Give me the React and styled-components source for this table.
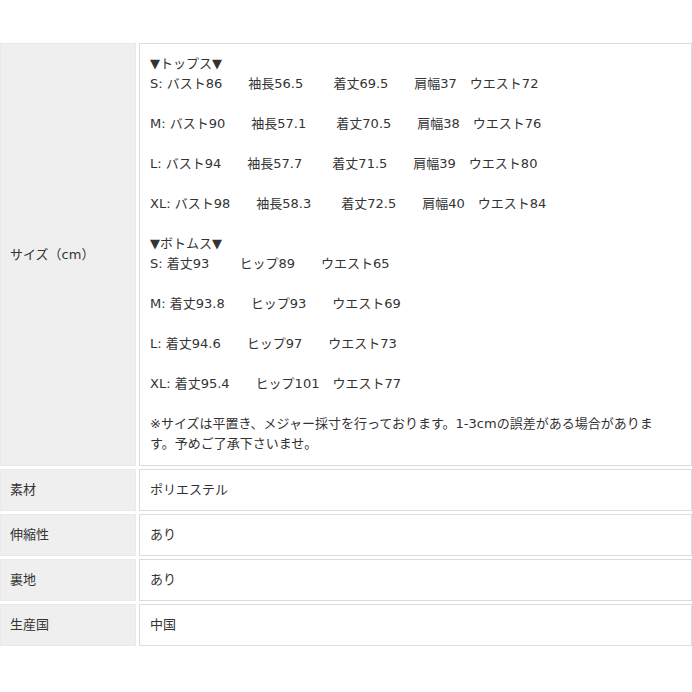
import React from "react";
import styled, { createGlobalStyle } from "styled-components";

const Global = createGlobalStyle`
  html, body { margin: 0; padding: 0; background: #ffffff; }
  body {
    font-family: "DejaVu Sans", "Noto Sans CJK JP", sans-serif;
    font-size: 13px;
    color: #333333;
  }
`;

const Spec = styled.div`
  display: grid;
  grid-template-columns: 136px 553px;
  column-gap: 3px;
  row-gap: 3px;
  width: 692px;
  margin-top: 43px;
`;

const Head = styled.div`
  background: #efefef;
  border: 1px solid #e9e9e9;
  padding: 10px 9px;
  line-height: 20px;
  display: flex;
  align-items: center;
  box-sizing: border-box;
`;

const Data = styled.div`
  background: #ffffff;
  border: 1px solid #dcdcdc;
  padding: ${(p) => (p.$tall ? "10px 10px 11px" : "10px")};
  line-height: 20px;
  box-sizing: border-box;
  min-height: 42px;
`;

const Line = styled.div`
  height: 20px;
  white-space: pre;
`;

const Gap = styled.div`
  height: 20px;
`;

const Note = styled.div`
  line-height: 20px;
`;

const tops = [
  "S: バスト86　　袖長56.5　　 着丈69.5　　肩幅37　ウエスト72",
  "M: バスト90　　袖長57.1　　 着丈70.5　　肩幅38　ウエスト76",
  "L: バスト94　　袖長57.7　　 着丈71.5　　肩幅39　ウエスト80",
  "XL: バスト98　　袖長58.3　　 着丈72.5　　肩幅40　ウエスト84",
];

const bottoms = [
  "S: 着丈93　　 ヒップ89　　ウエスト65",
  "M: 着丈93.8　　ヒップ93　　ウエスト69",
  "L: 着丈94.6　　ヒップ97　　ウエスト73",
  "XL: 着丈95.4　　ヒップ101　ウエスト77",
];

const rows = [
  ["素材", "ポリエステル"],
  ["伸縮性", "あり"],
  ["裏地", "あり"],
  ["生産国", "中国"],
];

export default function App() {
  return (
    <>
      <Global />
      <Spec>
        <Head>サイズ（cm）</Head>
        <Data $tall>
          <Line>▼トップス▼</Line>
          {tops.map((t) => (
            <React.Fragment key={t}>
              <Line>{t}</Line>
              <Gap />
            </React.Fragment>
          ))}
          <Line>▼ボトムス▼</Line>
          {bottoms.map((t) => (
            <React.Fragment key={t}>
              <Line>{t}</Line>
              <Gap />
            </React.Fragment>
          ))}
          <Note>
            ※サイズは平置き、メジャー採寸を行っております。1-3cmの誤差がある場合がありま
            <br />
            す。予めご了承下さいませ。
          </Note>
        </Data>
        {rows.map(([k, v]) => (
          <React.Fragment key={k}>
            <Head>{k}</Head>
            <Data>{v}</Data>
          </React.Fragment>
        ))}
      </Spec>
    </>
  );
}
